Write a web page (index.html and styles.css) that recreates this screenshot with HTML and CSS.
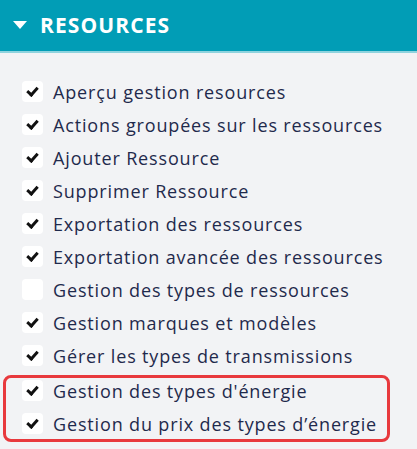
FILE: index.html
```html
<!DOCTYPE html>
<html lang="fr">
<head>
<meta charset="utf-8">
<link rel="stylesheet" href="styles.css">
</head>
<body>
<div class="panel">
  <div class="header">
    <span class="caret"></span>
    <span class="title">RESOURCES</span>
  </div>
  <ul class="list">
    <li class="item"><span class="box checked"></span><span class="label">Aperçu gestion resources</span></li>
    <li class="item"><span class="box checked"></span><span class="label">Actions groupées sur les ressources</span></li>
    <li class="item"><span class="box checked"></span><span class="label">Ajouter Ressource</span></li>
    <li class="item"><span class="box checked"></span><span class="label">Supprimer Ressource</span></li>
    <li class="item"><span class="box checked"></span><span class="label">Exportation des ressources</span></li>
    <li class="item"><span class="box checked"></span><span class="label">Exportation avancée des ressources</span></li>
    <li class="item"><span class="box"></span><span class="label">Gestion des types de ressources</span></li>
    <li class="item"><span class="box checked"></span><span class="label">Gestion marques et modèles</span></li>
    <li class="item"><span class="box checked"></span><span class="label">Gérer les types de transmissions</span></li>
    <li class="highlight">
      <ul class="sublist">
        <li class="item"><span class="box checked"></span><span class="label">Gestion des types d'énergie</span></li>
        <li class="item"><span class="box checked"></span><span class="label">Gestion du prix des types d’énergie</span></li>
      </ul>
    </li>
  </ul>
</div>
</body>
</html>
```

FILE: styles.css
```css
* { box-sizing: border-box; }
html, body { margin: 0; padding: 0; }
body {
  width: 417px;
  height: 449px;
  overflow: hidden;
  background: #f2f3f5;
  font-family: "Open Sans", Inter, sans-serif;
}
.panel { width: 417px; }
.header {
  height: 53px;
  background: #019db6;
  border-bottom: 2px solid #8fd3de;
  display: flex;
  align-items: center;
  padding-left: 13px;
  padding-bottom: 2px;
}
.caret {
  width: 0;
  height: 0;
  border-left: 7px solid transparent;
  border-right: 7px solid transparent;
  border-top: 8px solid #ffffff;
  margin-right: 13px;
}
.title {
  color: #ffffff;
  font-weight: 700;
  font-size: 21px;
  letter-spacing: 1.1px;
}
.list, .sublist {
  list-style: none;
  margin: 0;
  padding: 0;
}
.list { padding-top: 22px; }
.item {
  height: 33px;
  display: flex;
  align-items: center;
  padding-left: 22px;
}
.box {
  width: 21px;
  height: 21px;
  border-radius: 4px;
  background: #ffffff;
  margin-right: 10px;
  position: relative;
  flex: none;
}
.box.checked::after {
  content: "";
  position: absolute;
  left: 7px;
  top: 4px;
  width: 4px;
  height: 8px;
  border-right: 3px solid #111;
  border-bottom: 3px solid #111;
  transform: rotate(42deg);
}
.label {
  color: #1f2a4c;
  font-size: 18px;
  letter-spacing: 0.85px;
  white-space: nowrap;
}
.highlight {
  margin: 2.5px 27px 0 3px;
  border: 3px solid #e8393d;
  border-radius: 8px;
  height: 67px;
  padding-top: 1px;
}
.sublist {
  display: flex;
  flex-direction: column;
  gap: 9px;
}
.sublist .item {
  height: 24px;
  padding-left: 16px;
}
```
